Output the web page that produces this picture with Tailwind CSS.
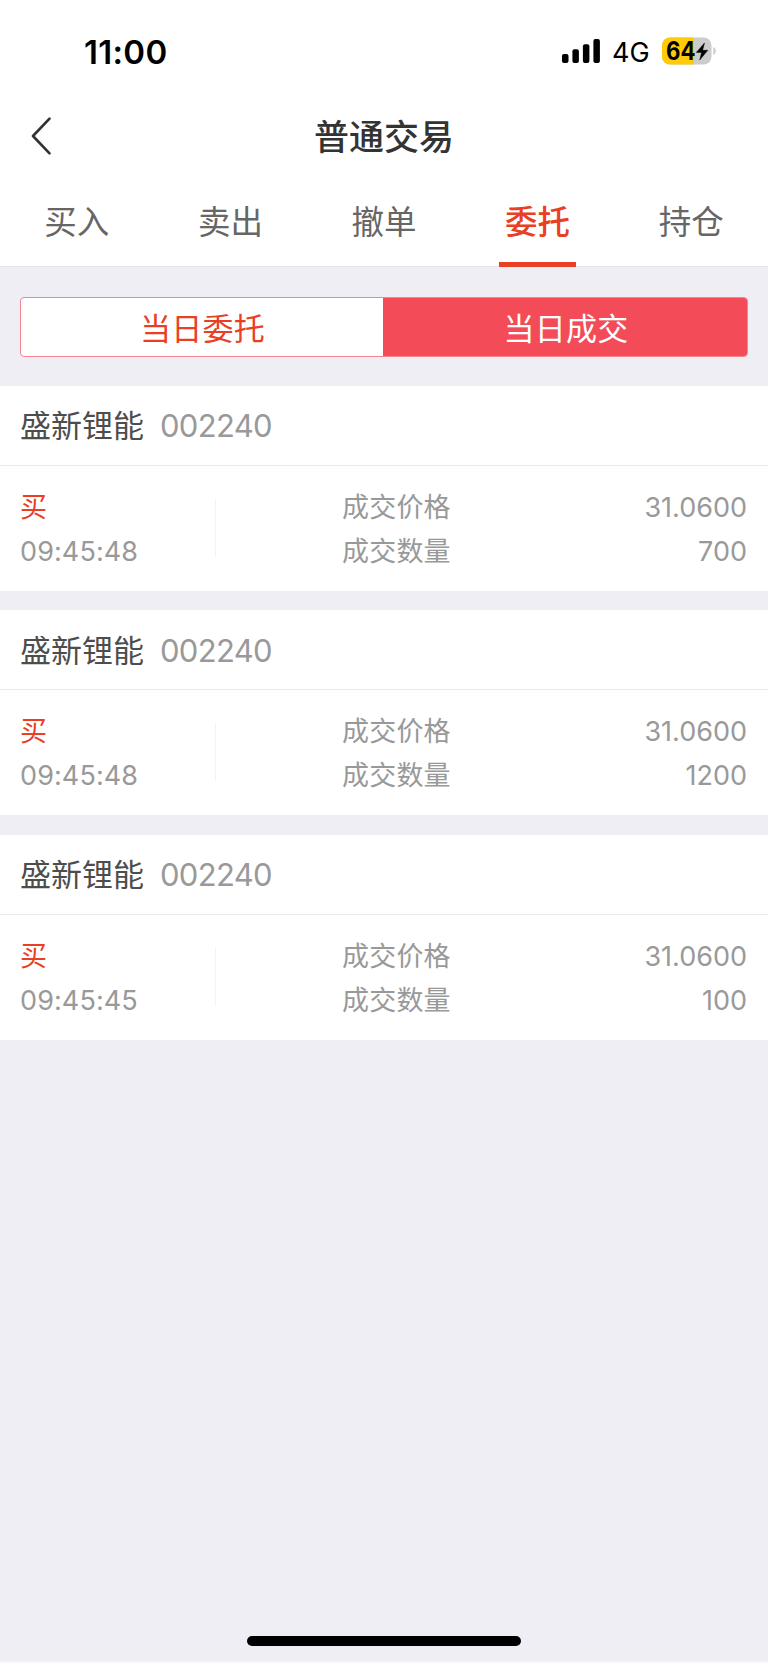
<!DOCTYPE html>
<html lang="zh-CN">
<head>
<meta charset="utf-8">
<title>普通交易</title>
<script src="https://cdn.jsdelivr.net/npm/@tailwindcss/browser@4"></script>
</head>
<body class="bg-[#efeef4]">
<div class="flex h-[1663px] w-[768px] flex-col overflow-hidden bg-[#efeef4] font-['Inter','Noto_Sans_CJK_SC',sans-serif] text-[#999999]">

  <header class="h-[267px] shrink-0 border-b border-[#e4e4e7] bg-white">
    <!-- status bar -->
    <div class="flex h-[102px] items-center justify-between pl-[84px] pr-[51px] text-black">
      <span class="pt-px text-[33px] font-semibold leading-10 tracking-[0.3px]">11:00</span>
      <div class="flex items-center">
        <svg class="h-[24px] w-[39px]" viewBox="0 0 39 24" fill="#000">
          <rect x="0" y="15" width="6.5" height="9" rx="2"/>
          <rect x="10.4" y="10.2" width="6.5" height="13.8" rx="2"/>
          <rect x="20.9" y="5.2" width="6.5" height="18.8" rx="2"/>
          <rect x="31.4" y="0" width="6.5" height="24" rx="2"/>
        </svg>
        <span class="ml-[11px] w-[50px] pt-[3px] text-[27px] leading-8">4G</span>
        <svg class="h-[28px] w-[55px]" viewBox="0 0 55 28">
          <rect x="0" y="0.5" width="49.5" height="27" rx="8" fill="#cccccc"/>
          <path d="M8 0.5H32V27.5H8A8 8 0 0 1 0 19.500V8.500A8 8 0 0 1 8 0.500Z" fill="#fecb04"/>
          <path d="M51.300 10c3.300 1.200 3.300 6.800 0 8Z" fill="#cccccc"/>
          <text x="4" y="23.200" font-size="25" font-weight="700" textLength="29.500" lengthAdjust="spacingAndGlyphs" fill="#000">64</text>
          <path d="M42.500 6L34.300 15.400h5.300L37.700 23 45.800 13.300h-5.200Z" fill="#000" stroke="#000" stroke-width="0.500" stroke-linejoin="round"/>
        </svg>
      </div>
    </div>
    <!-- navigation bar -->
    <div class="grid h-[68px] grid-cols-[1fr_auto_1fr] items-center px-[31px]">
      <svg class="h-[38px] w-[20px]" viewBox="0 0 20 38" fill="none" stroke="#333" stroke-width="2.600" stroke-linecap="round" stroke-linejoin="round"><path d="M18.500 1.700L2 19L18.500 36.300"/></svg>
      <h1 class="pt-px text-[35px] font-medium leading-[48px] text-[#333333]">普通交易</h1>
    </div>
    <!-- tabs -->
    <nav class="grid h-[97px] grid-cols-5 text-center text-[32.500px] leading-[48px] text-[#666666]">
      <a class="pt-[29px]">买入</a>
      <a class="pt-[29px]">卖出</a>
      <a class="pt-[29px]">撤单</a>
      <a class="flex flex-col items-center justify-between pt-[29px] font-medium text-[#e93f24]">委托<span class="h-[5px] w-[77px] bg-[#e93f24]"></span></a>
      <a class="pt-[29px]">持仓</a>
    </nav>
  </header>

  <div class="h-[119px] shrink-0 px-[20px] pt-[30px]">
    <div class="grid h-[60px] grid-cols-2 overflow-hidden rounded-[4px] border border-[#f58490] bg-white text-center text-[31px] leading-[61px] tracking-[0.3px]">
      <div class="text-[#e93f24]">当日委托</div>
      <div class="-ml-px bg-[#f34b58] pl-0.5 text-white">当日成交</div>
    </div>
  </div>

  <main class="flex flex-col gap-[19.350px]">
    <article class="h-[205px] bg-white">
      <div class="flex h-[80px] items-center gap-[16px] border-b border-[#e9e9ec] px-[20px] pt-0.5 text-[31px]">
        <span class="text-[#4d4d4d]">盛新锂能</span><span class="tracking-[-0.700px]">002240</span>
      </div>
      <div class="flex h-[125px] items-start px-[20px] pt-[20px] text-[27px] leading-[44px]">
        <div class="w-[195px]"><div class="text-[#e93f24]">买</div><div class="tracking-[0.100px]">09:45:48</div></div>
        <div class="mt-[13px] h-[58px] w-px bg-[#f3f3f4]"></div>
        <div class="ml-[126px] tracking-[0.200px]"><div>成交价格</div><div>成交数量</div></div>
        <div class="ml-auto pr-px text-right"><div>31.0600</div><div>700</div></div>
      </div>
    </article>

    <article class="h-[205px] bg-white">
      <div class="flex h-[80px] items-center gap-[16px] border-b border-[#e9e9ec] px-[20px] pt-0.5 text-[31px]">
        <span class="text-[#4d4d4d]">盛新锂能</span><span class="tracking-[-0.700px]">002240</span>
      </div>
      <div class="flex h-[125px] items-start px-[20px] pt-[20px] text-[27px] leading-[44px]">
        <div class="w-[195px]"><div class="text-[#e93f24]">买</div><div class="tracking-[0.100px]">09:45:48</div></div>
        <div class="mt-[13px] h-[58px] w-px bg-[#f3f3f4]"></div>
        <div class="ml-[126px] tracking-[0.200px]"><div>成交价格</div><div>成交数量</div></div>
        <div class="ml-auto pr-px text-right"><div>31.0600</div><div>1200</div></div>
      </div>
    </article>

    <article class="h-[205px] bg-white">
      <div class="flex h-[80px] items-center gap-[16px] border-b border-[#e9e9ec] px-[20px] pt-0.5 text-[31px]">
        <span class="text-[#4d4d4d]">盛新锂能</span><span class="tracking-[-0.700px]">002240</span>
      </div>
      <div class="flex h-[125px] items-start px-[20px] pt-[20px] text-[27px] leading-[44px]">
        <div class="w-[195px]"><div class="text-[#e93f24]">买</div><div class="tracking-[0.100px]">09:45:45</div></div>
        <div class="mt-[13px] h-[58px] w-px bg-[#f3f3f4]"></div>
        <div class="ml-[126px] tracking-[0.200px]"><div>成交价格</div><div>成交数量</div></div>
        <div class="ml-auto pr-px text-right"><div>31.0600</div><div>100</div></div>
      </div>
    </article>
  </main>

  <!-- home indicator -->
  <footer class="mt-auto flex justify-center border-b-2 border-[#f7f7f9] pb-[15px]"><div class="h-[10px] w-[274px] rounded-full bg-black"></div></footer>
</div>
</body>
</html>
